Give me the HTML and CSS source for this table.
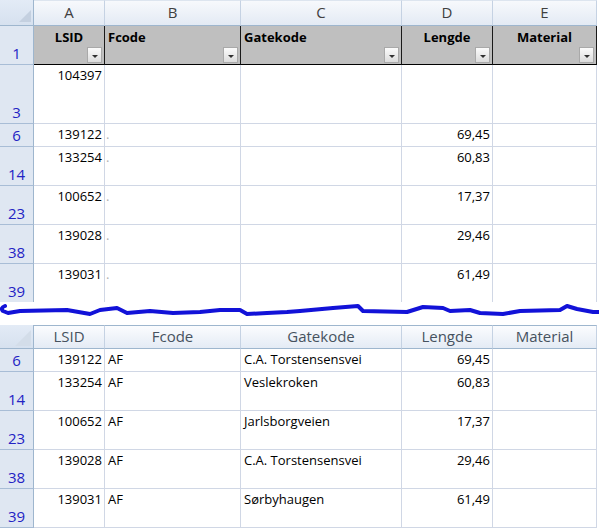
FILE: index.html
```html
<!DOCTYPE html>
<html>
<head>
<meta charset="utf-8">
<link rel="stylesheet" href="styles.css">
</head>
<body>
<div class="sheet top">
  <div class="row h26 colhdrs">
    <div class="corner"><svg width="33" height="25" viewBox="0 0 33 25"><polygon points="19,22 31,22 31,10" fill="#c4d0e0"/></svg></div>
    <div class="ch">A</div><div class="ch">B</div><div class="ch">C</div><div class="ch">D</div><div class="ch">E</div>
  </div>
  <div class="row h39 titles">
    <div class="rh">1</div>
    <div class="th center">LSID<span class="dd"></span></div>
    <div class="th">Fcode<span class="dd"></span></div>
    <div class="th">Gatekode<span class="dd"></span></div>
    <div class="th center">Lengde<span class="dd"></span></div>
    <div class="th center">Material<span class="dd"></span></div>
  </div>
  <div class="row h59">
    <div class="rh">3</div><div class="c num">104397</div><div class="c"></div><div class="c"></div><div class="c"></div><div class="c"></div>
  </div>
  <div class="row h23">
    <div class="rh">6</div><div class="c num">139122</div><div class="c dot">.</div><div class="c"></div><div class="c num">69,45</div><div class="c"></div>
  </div>
  <div class="row h39">
    <div class="rh">14</div><div class="c num">133254</div><div class="c dot">.</div><div class="c"></div><div class="c num">60,83</div><div class="c"></div>
  </div>
  <div class="row h39">
    <div class="rh">23</div><div class="c num">100652</div><div class="c dot">.</div><div class="c"></div><div class="c num">17,37</div><div class="c"></div>
  </div>
  <div class="row h39">
    <div class="rh">38</div><div class="c num">139028</div><div class="c dot">.</div><div class="c"></div><div class="c num">29,46</div><div class="c"></div>
  </div>
  <div class="row h39">
    <div class="rh">39</div><div class="c num">139031</div><div class="c dot">.</div><div class="c"></div><div class="c num">61,49</div><div class="c"></div>
  </div>
</div>
<svg class="scribble" width="599" height="23" viewBox="0 302 599 23">
  <path d="M5,306 Q0,308 3,311 L8,313 L20,311 L67,310 L90,314 L100,310 L117,308 L127,313 L150,311 L173,313 L200,312 L220,310 L240,310 L247,314 L267,313 L287,312 L300,311 L333,308 L358,306 L363,311 L407,312 L423,307 L443,308 L450,311 L470,310 L480,313 L503,314 L520,311 L560,310 L567,306 L577,309 L593,312 L599,312" fill="none" stroke="#1212d8" stroke-width="4" stroke-linecap="round" stroke-linejoin="round"/>
</svg>
<div class="sheet bottom">
  <div class="row h24 labels">
    <div class="corner"><svg width="33" height="23" viewBox="0 0 33 23"><polygon points="15,21 31,21 31,5" fill="#d3dde9"/></svg></div>
    <div class="lh">LSID</div><div class="lh">Fcode</div><div class="lh">Gatekode</div><div class="lh">Lengde</div><div class="lh">Material</div>
  </div>
  <div class="row h23">
    <div class="rh">6</div><div class="c num">139122</div><div class="c">AF</div><div class="c">C.A. Torstensensvei</div><div class="c num">69,45</div><div class="c"></div>
  </div>
  <div class="row h39">
    <div class="rh">14</div><div class="c num">133254</div><div class="c">AF</div><div class="c">Veslekroken</div><div class="c num">60,83</div><div class="c"></div>
  </div>
  <div class="row h39">
    <div class="rh">23</div><div class="c num">100652</div><div class="c">AF</div><div class="c">Jarlsborgveien</div><div class="c num">17,37</div><div class="c"></div>
  </div>
  <div class="row h39">
    <div class="rh">38</div><div class="c num">139028</div><div class="c">AF</div><div class="c">C.A. Torstensensvei</div><div class="c num">29,46</div><div class="c"></div>
  </div>
  <div class="row h39">
    <div class="rh">39</div><div class="c num">139031</div><div class="c">AF</div><div class="c">Sørbyhaugen</div><div class="c num">61,49</div><div class="c"></div>
  </div>
</div>
</body>
</html>
```
FILE: styles.css
```css
* { box-sizing: border-box; }
html, body { margin: 0; padding: 0; background: #fff; }
body {
  width: 599px;
  height: 528px;
  overflow: hidden;
  font-family: "Open Sans", "Noto Sans", sans-serif;
  font-size: 13px;
  color: #000;
}
.sheet { width: 599px; overflow: hidden; }
.sheet.top { height: 302px; }
.scribble { display: block; }
.row {
  display: grid;
  grid-template-columns: 34px 71px 136px 161px 91px 104px;
}
.h23 { height: 23px; }
.h24 { height: 24px; }
.h26 { height: 26px; }
.h39 { height: 39px; }
.h59 { height: 59px; }

.c {
  border-right: 1px solid #d0d7e5;
  border-bottom: 1px solid #d0d7e5;
  padding: 2px 3px 0 3px;
  line-height: 17px;
  white-space: nowrap;
  overflow: hidden;
}
.num { text-align: right; padding-right: 2px; }
.dot { color: #b0b0b0; padding-left: 1px; }

.rh {
  background: #dfe7f2;
  border-right: 1px solid #9eb6ce;
  border-bottom: 1px solid #a8bdd6;
  color: #2323c4;
  font-size: 15px;
  line-height: 16px;
  display: flex;
  align-items: flex-end;
  justify-content: center;
  padding-bottom: 3px;
}

.corner {
  background: linear-gradient(#e3ebf6, #d6e1ef);
  border-right: 1px solid #9eb6ce;
  border-bottom: 1px solid #9eb6ce;
  line-height: 0;
}
.corner svg { display: block; }

.ch {
  background: linear-gradient(#f7f9fc, #e3eaf4);
  border-right: 1px solid #c5d2e3;
  border-bottom: 1px solid #9eb6ce;
  border-top: 1px solid #dde5ef;
  color: #404040;
  font-size: 15px;
  line-height: 22px;
  text-align: center;
}

.th {
  position: relative;
  background: #bfbfbf;
  border-right: 1px solid #1a1a1a;
  border-bottom: 1px solid #000;
  font-weight: bold;
  padding: 3px 3px 0 3px;
  line-height: 16px;
  white-space: nowrap;
}
.th.center { text-align: center; padding-right: 3px; }

.dd {
  position: absolute;
  right: 2px;
  bottom: 1px;
  width: 15px;
  height: 16px;
  border: 1px solid #a9a9a9;
  background: linear-gradient(#fbfbfb, #dcdcdc);
}
.dd::after {
  content: "";
  position: absolute;
  left: 4px;
  top: 7px;
  border-left: 3px solid transparent;
  border-right: 3px solid transparent;
  border-top: 3px solid #303030;
}

.lh {
  background: linear-gradient(#fbfcfe, #e4ebf5);
  border-right: 1px solid #c5d2e3;
  border-bottom: 1px solid #9eb6ce;
  border-top: 1px solid #9eb6ce;
  color: #46525f;
  font-size: 15px;
  line-height: 21px;
  text-align: center;
}
```
